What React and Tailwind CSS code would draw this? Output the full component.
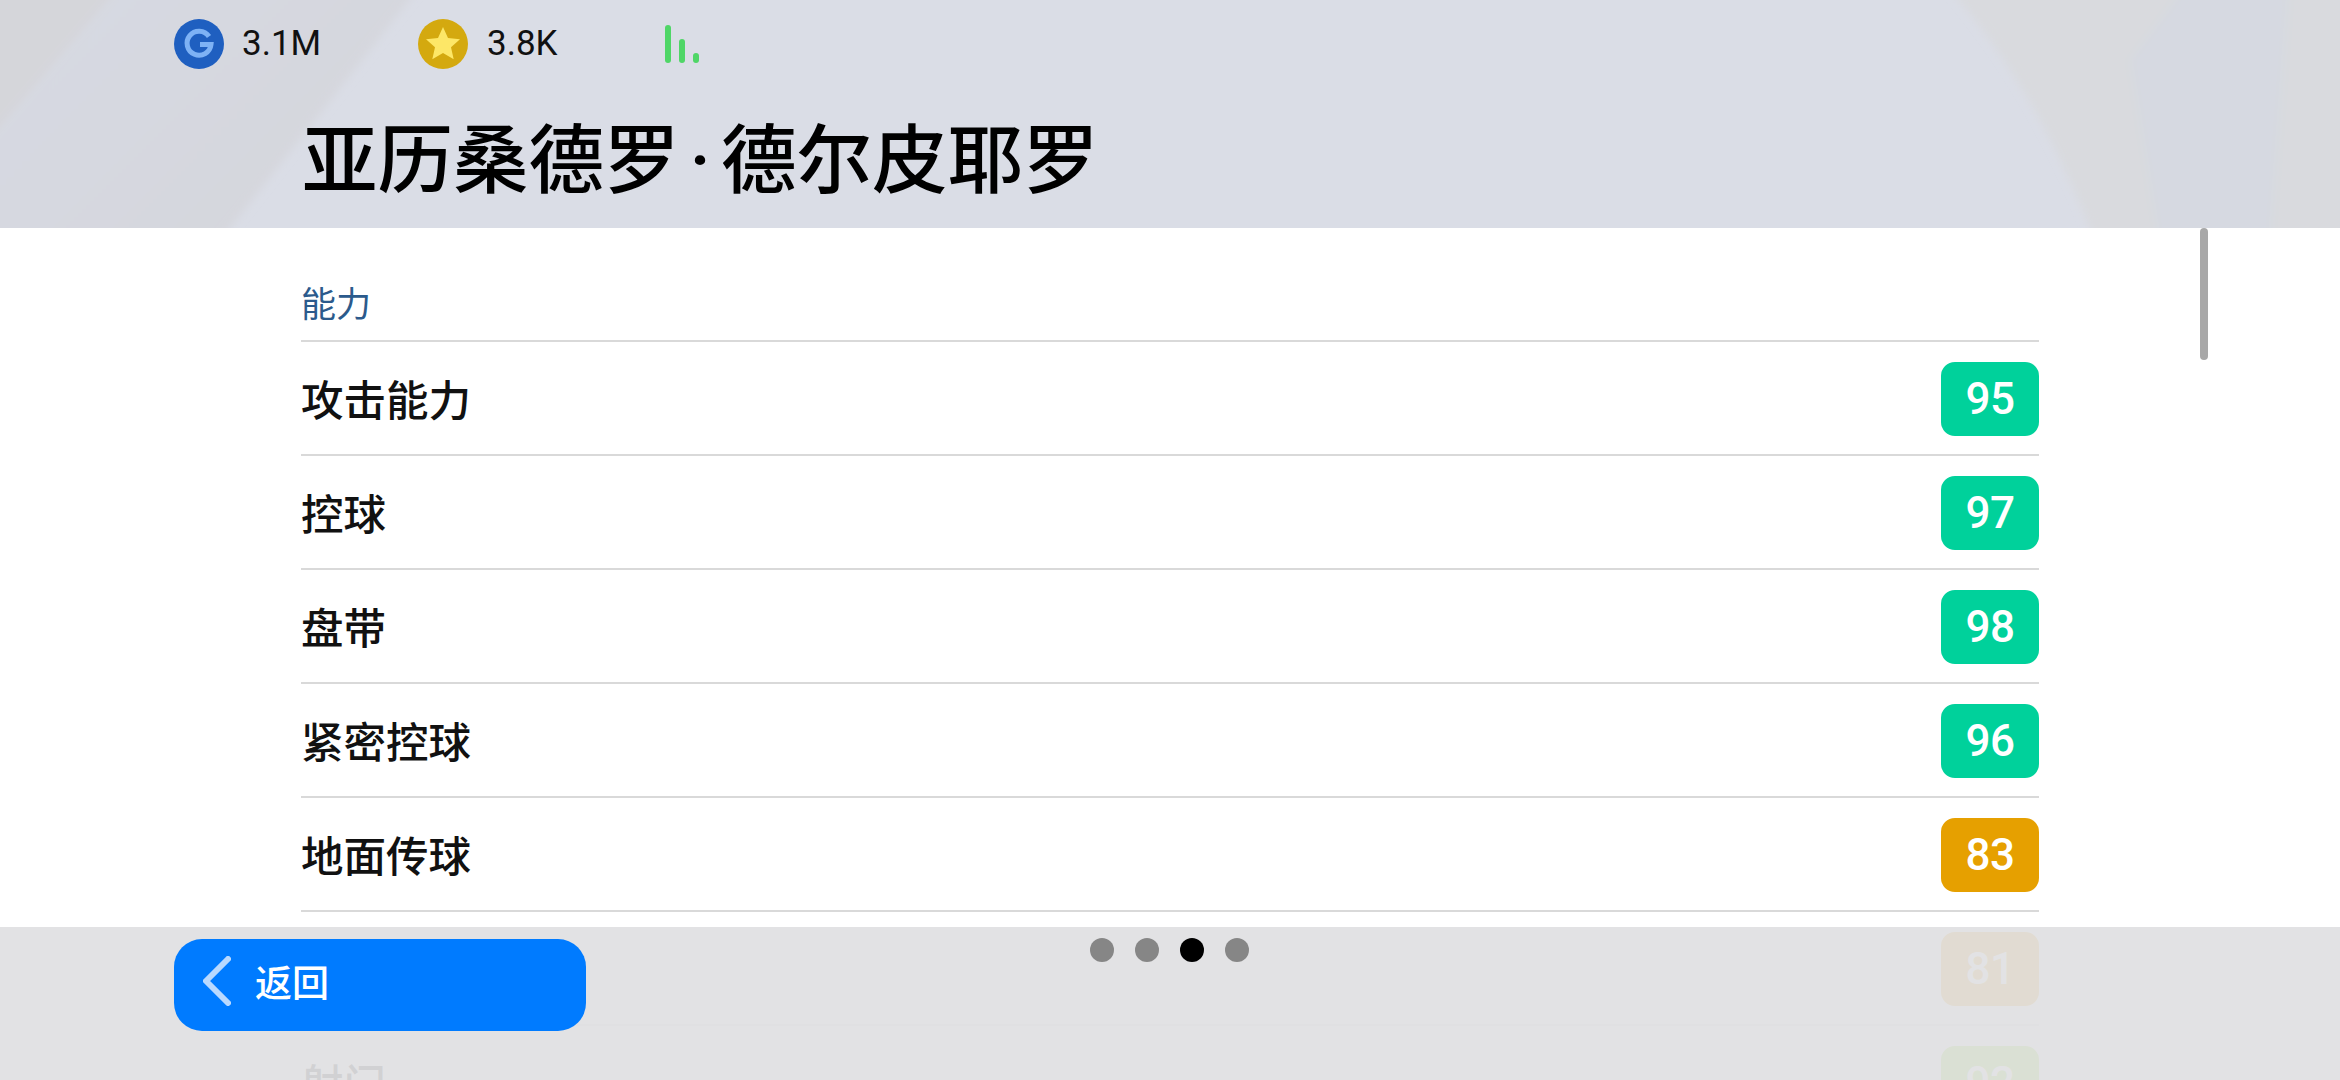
import React from "react";

const ROWS = [
  { label: "攻击能力", value: 95, color: "bg-[#00d19b]" },
  { label: "控球", value: 97, color: "bg-[#00d19b]" },
  { label: "盘带", value: 98, color: "bg-[#00d19b]" },
  { label: "紧密控球", value: 96, color: "bg-[#00d19b]" },
  { label: "地面传球", value: 83, color: "bg-[#e6a000]" },
  { label: "高空传球", value: 81, color: "bg-[#e6a000]" },
  { label: "射门", value: 92, color: "bg-[#8ed81f]" },
];

const cjk = "font-['Noto_Sans_CJK_SC','Noto_Sans_CJK_JP',sans-serif]";

const HeaderBackdrop = () => (
  <svg className="absolute inset-0" width="2340" height="228" viewBox="0 0 2340 228">
    <defs>
      <linearGradient id="band" x1="0" y1="0" x2="1" y2="0.6">
        <stop offset="0" stopColor="#d7dae3" />
        <stop offset="0.5" stopColor="#d6d8e0" />
        <stop offset="1" stopColor="#d5d6db" />
      </linearGradient>
      <filter id="soft">
        <feGaussianBlur stdDeviation="4" />
      </filter>
    </defs>
    <g filter="url(#soft)">
      <path d="M-20 -20H125L-20 150Z" fill="#d5d6da" />
      <path d="M125 -20H425L213 250H-20V150Z" fill="url(#band)" />
      <path d="M1942 -20Q2040 90 2098 250H2360V-20Z" fill="#d9dade" />
      <path d="M2130 60L2160 250H2270L2290 -20H2190Z" fill="#d6d9e1" />
    </g>
  </svg>
);

const GoldCoin = () => (
  <svg width="50" height="50" viewBox="0 0 50 50">
    <circle cx="25" cy="25" r="25" fill="#d4a90f" />
    <path d="M25 8l5 11 12 1.300-9 8 2.700 12L25 34l-10.700 6.300L17 28.300l-9-8L20 19z" fill="#fde767" />
  </svg>
);

const GoogleCoin = () => (
  <svg width="50" height="50" viewBox="0 0 50 50">
    <circle cx="25" cy="25" r="25" fill="#1f5fc0" />
    <path d="M35 17.500A12 12 0 1 0 37 25.500H26" fill="none" stroke="#7eb2f5" strokeWidth="5" />
  </svg>
);

const SignalBars = () => (
  <div className="flex h-[38px] items-end gap-2">
    <div className="h-[38px] w-[6px] rounded-sm bg-[#4fd667]" />
    <div className="h-[24px] w-[6px] rounded-sm bg-[#4fd667]" />
    <div className="h-[10px] w-[6px] rounded-sm bg-[#4fd667]" />
  </div>
);

const Row = ({ row }) => (
  <div className="flex h-[114px] items-center justify-between border-b-2 border-[#d9d9d9]">
    <span className="text-[42.5px] leading-none font-medium text-[#111]">{row.label}</span>
    <span
      className={`mt-[2px] flex h-[74px] w-[98px] items-center justify-center rounded-[14px] font-['Roboto',sans-serif] text-[44px] font-medium tracking-[-0.5px] text-white ${row.color}`}
    >
      {row.value}
    </span>
  </div>
);

const App = () => {
  return (
    <div className={`relative flex h-[1080px] w-[2340px] flex-col overflow-hidden bg-white ${cjk}`}>
      {/* Header */}
      <div className="relative h-[228px] shrink-0 overflow-hidden bg-[#dadde6]">
        <HeaderBackdrop />
        <div className="relative flex h-[88px] items-center pl-[174px] font-['Roboto',sans-serif] text-[35px] text-[#111]">
          <GoogleCoin />
          <span className="ml-[18px] w-[176px]">3.1M</span>
          <GoldCoin />
          <span className="ml-[19px] w-[178px]">3.8K</span>
          <SignalBars />
        </div>
        <h1 className="relative mt-[16px] ml-[302px] text-[75.5px] leading-[100px] font-medium text-black">
          亚历桑德罗<span className="mx-[10px] font-['Roboto',sans-serif]">·</span>德尔皮耶罗
        </h1>
      </div>

      {/* Attribute list */}
      <div className="relative min-h-0 flex-1 overflow-hidden">
        <div className="ml-[301px] w-[1738px]">
          <div className="flex h-[114px] items-center border-b-2 border-[#d9d9d9] pt-[36px] text-[35px] text-[#2b5a8c]">
            能力
          </div>
          {ROWS.map((row) => (
            <Row key={row.label} row={row} />
          ))}
        </div>
        <div className="absolute top-0 right-[132px] h-[132px] w-2 rounded-full bg-[#a8a8a8]" />
      </div>

      {/* Footer bar over the list */}
      <div className="absolute inset-x-0 bottom-0 flex h-[153px] items-start bg-[#e0e0e2]/[0.93] pt-[11px] pl-[174px]">
        <button className="mt-px flex h-[92px] w-[412px] items-center rounded-[28px] bg-[#007bff] pb-2 pl-[29px] text-[37px] font-medium text-white">
          <svg width="28" height="50" viewBox="0 0 28 50" fill="none">
            <path d="M25 3L3 25l22 22" stroke="#b9d9ff" strokeWidth="6" strokeLinecap="round" strokeLinejoin="round" />
          </svg>
          <span className="ml-[24px] leading-none">返回</span>
        </button>
        <div className="ml-[504px] flex gap-[21px]">
          <div className="size-6 rounded-full bg-[#868686]" />
          <div className="size-6 rounded-full bg-[#868686]" />
          <div className="size-6 rounded-full bg-black" />
          <div className="size-6 rounded-full bg-[#868686]" />
        </div>
      </div>
    </div>
  );
};

export default App;
